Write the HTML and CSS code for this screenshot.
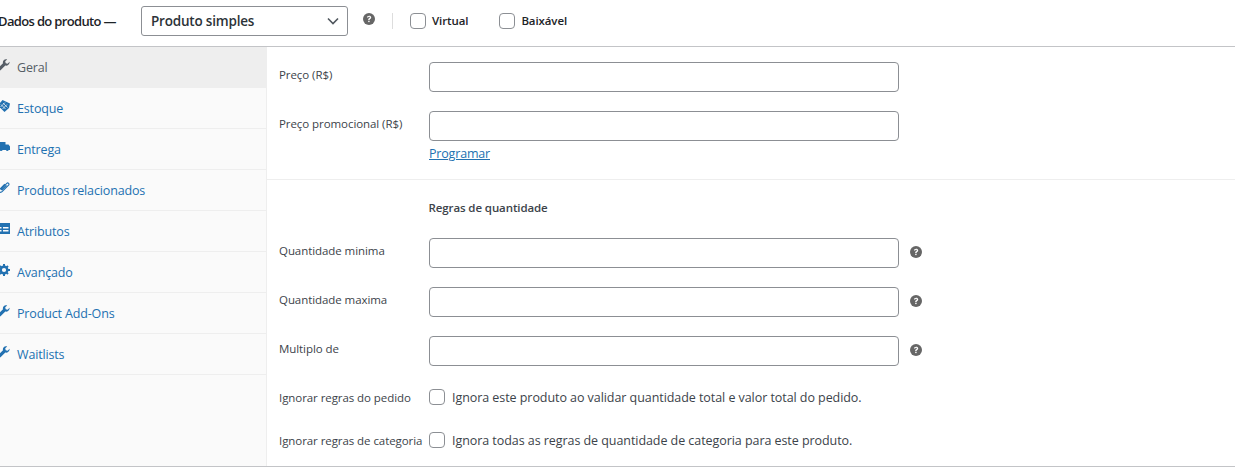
FILE: index.html
```html
<!DOCTYPE html>
<html lang="pt-BR">
<head>
<meta charset="utf-8">
<title>Dados do produto</title>
<link rel="stylesheet" href="styles.css">
</head>
<body>
<svg class="defs" aria-hidden="true" width="0" height="0">
  <symbol id="help" viewBox="0 0 12 12">
    <circle cx="6" cy="6" r="6" fill="currentColor"/>
    <path d="M3.9 4.600C4 3.400 4.900 2.700 6.100 2.700c1.200 0 2.100.7 2.100 1.700 0 .8-.5 1.200-1 1.500-.5.3-.6.5-.6 1H5.200c0-.9.3-1.300.8-1.700.4-.3.8-.4.8-.8 0-.3-.3-.6-.7-.6-.5 0-.8.3-.9.8z" fill="#fff"/>
    <rect x="5.200" y="7.700" width="1.400" height="1.400" fill="#fff"/>
  </symbol>
  <symbol id="wrench" viewBox="0 0 12 12">
    <path d="M11.600 2.700 9.600 4.700 7.700 4.200 7.200 2.300 9.200.4C7.900-.1 6.500.2 5.700 1.200 4.900 2 4.700 3.200 5 4.200L.5 8.700c-.6.6-.6 1.600 0 2.300.6.6 1.700.6 2.300 0l4.500-4.500c1 .3 2.200.1 3-.7 1-.9 1.400-2.300 1.300-3.100z" fill="currentColor"/>
  </symbol>
</svg>

<header class="top">
  <span class="title">Dados do produto —</span>
  <div class="select"><span>Produto simples</span>
    <svg class="chev" width="12" height="8" viewBox="0 0 12 8"><path d="M1 1.500 6 6.500 11 1.500" fill="none" stroke="currentColor" stroke-width="1.600"/></svg>
  </div>
  <svg class="help top-help" width="12" height="12"><use href="#help"/></svg>
  <span class="sep"></span>
  <label class="opt"><input type="checkbox" class="check">Virtual</label>
  <label class="opt opt-b"><input type="checkbox" class="check">Baixável</label>
</header>

<section class="panel">
  <nav class="tabs">
    <a class="tab active"><svg class="ico" width="12" height="12"><use href="#wrench"/></svg>Geral</a>
    <a class="tab"><svg class="ico" width="12" height="12" viewBox="0 0 12 12"><path d="M4.500 0 12 3.500 11 8 6.500 12 0 5.500z" fill="currentColor"/><path d="M3 4.500l4.500 4.500M5 3l4.500 4.500M2.500 7l4.500-4.500M4.500 9l4.500-4.500" stroke="#fafafa" stroke-width=".7"/></svg>Estoque</a>
    <a class="tab"><svg class="ico" width="12" height="12" viewBox="0 0 12 12"><path d="M0 1h7.500v2.500H10.500l1.500 2V9h-1.300a1.500 1.500 0 0 1-2.800 0H4.600a1.500 1.500 0 0 1-2.800 0H0z" fill="currentColor"/></svg>Entrega</a>
    <a class="tab"><svg class="ico" width="12" height="12" viewBox="0 0 12 12"><path d="M6.800 2.200 1.700 7.300c-1.800 1.800.6 4.200 2.400 2.400l6.500-6.500c1.200-1.200-.6-3-1.800-1.800L3.500 6.700c-.6.6.2 1.400.8.800l4.200-4.200" fill="none" stroke="currentColor" stroke-width="1.100"/></svg>Produtos relacionados</a>
    <a class="tab"><svg class="ico" width="12" height="12" viewBox="0 0 12 12"><path fill-rule="evenodd" d="M0 0h12v11H0zM1.500 4v1.500h2V4zM5 4v1.500h5.500V4zM1.500 7v1.500h2V7zM5 7v1.500h5.500V7z" fill="currentColor"/></svg>Atributos</a>
    <a class="tab"><svg class="ico" width="12" height="12" viewBox="0 0 12 12"><circle cx="6" cy="6" r="3.300" fill="none" stroke="currentColor" stroke-width="2.400"/><path d="M5 0h2v2H5zM5 10h2v2H5zM0 5h2v2H0zM10 5h2v2h-2zM1.300 2.700l1.400-1.400 1.400 1.400-1.400 1.400zM7.900 2.700l1.400-1.400 1.400 1.400-1.400 1.400zM1.300 9.300l1.400 1.400 1.400-1.400-1.400-1.400zM7.900 9.300l1.400 1.400 1.400-1.400-1.400-1.400z" fill="currentColor"/></svg>Avançado</a>
    <a class="tab"><svg class="ico" width="12" height="12"><use href="#wrench"/></svg>Product Add-Ons</a>
    <a class="tab"><svg class="ico" width="12" height="12"><use href="#wrench"/></svg>Waitlists</a>
  </nav>
  <div class="content">
    <div class="group group-price">
      <div class="row"><label class="lbl">Preço (R$)</label><input class="field"></div>
      <div class="row"><label class="lbl">Preço promocional (R$)</label><input class="field"></div>
      <a class="schedule">Programar</a>
    </div>
    <div class="group group-qty">
      <h4 class="heading">Regras de quantidade</h4>
      <div class="row"><label class="lbl">Quantidade minima</label><input class="field"><svg class="help" width="12" height="12"><use href="#help"/></svg></div>
      <div class="row"><label class="lbl">Quantidade maxima</label><input class="field"><svg class="help" width="12" height="12"><use href="#help"/></svg></div>
      <div class="row"><label class="lbl">Multiplo de</label><input class="field"><svg class="help" width="12" height="12"><use href="#help"/></svg></div>
      <div class="row row-check"><label class="lbl">Ignorar regras do pedido</label><input type="checkbox" class="check"><span class="desc">Ignora este produto ao validar quantidade total e valor total do pedido.</span></div>
      <div class="row row-check"><label class="lbl">Ignorar regras de categoria</label><input type="checkbox" class="check"><span class="desc">Ignora todas as regras de quantidade de categoria para este produto.</span></div>
    </div>
  </div>
</section>
</body>
</html>
```
FILE: styles.css
```css
* { box-sizing: border-box; }
html, body { margin: 0; padding: 0; }
body {
  background: #fff;
  color: #3c434a;
  font-family: "Open Sans", "Noto Sans", sans-serif;
  font-size: 12px;
  overflow: hidden;
  height: 467px;
}
.defs { position: absolute; }
.top {
  display: flex;
  align-items: center;
  height: 47px;
  margin-left: -2px;
  padding-bottom: 5px;
  border-bottom: 1px solid #c3c4c7;
  color: #1d2327;
}
.title { width: 143px; font-size: 13px; font-weight: 600; letter-spacing: -.65px; white-space: nowrap; }
.select {
  display: flex;
  align-items: center;
  justify-content: space-between;
  width: 207px;
  height: 30px;
  padding: 0 8px 0 9px;
  border: 1px solid #8c8f94;
  border-radius: 3px;
  font-size: 13.500px;
  font-weight: 600;
  color: #2c3338;
  letter-spacing: -.2px;
}
.chev { color: #50575e; }
.help { color: #666; flex: none; }
.top-help { margin-left: 15px; margin-top: -3px; }
.sep { width: 1px; height: 16px; background: #ddd; margin-left: 17px; }
.opt { display: flex; align-items: center; margin-left: 17px; font-size: 11.500px; font-weight: 600; letter-spacing: -.1px; }
.opt-b { margin-left: 31px; }
.opt .check { margin-right: 6px; }
.check {
  appearance: none;
  width: 16px;
  height: 16px;
  margin: 0;
  flex: none;
  background: #fff;
  border: 1px solid #8c8f94;
  border-radius: 4px;
}
.panel { display: flex; height: 420px; border-bottom: 1px solid #c3c4c7; }
.tabs { width: 267px; flex: none; background: #fafafa; border-right: 1px solid #eee; }
.tab {
  display: flex;
  align-items: center;
  height: 41px;
  padding-top: 1px;
  margin-left: -2px;
  width: calc(100% + 2px);
  border-bottom: 1px solid #eee;
  color: #2271b1;
  font-size: 12.500px;
  letter-spacing: -.15px;
}
.tab.active { background: #eee; color: #555d66; border-bottom-color: #eee; }
.ico { flex: none; margin-right: 7px; margin-top: -5px; }
.content { flex: 1; min-width: 0; }
.group-price { height: 133px; padding-top: 15px; border-bottom: 1px solid #eee; }
.row { display: flex; align-items: center; height: 30px; margin-bottom: 19px; padding-left: 12px; }
.lbl { width: 150px; flex: none; font-size: 11.500px; letter-spacing: -.07px; margin-top: -5px; white-space: nowrap; }
.field {
  width: 470px;
  height: 30px;
  padding: 0 8px;
  background: #fff;
  border: 1px solid #8c8f94;
  border-radius: 4px;
  flex: none;
}
.row .help { margin-left: 11px; margin-top: -2px; }
.schedule { display: block; margin: -15px 0 0 162px; color: #2271b1; text-decoration: underline; font-size: 12.500px; letter-spacing: -.18px; }
.group-qty { padding-top: 20px; }
.heading { margin: 0 0 22px 161.500px; font-size: 11.500px; font-weight: 600; letter-spacing: -.1px; color: #3c434a; line-height: 16px; }
.row-check { height: 16px; margin-bottom: 27px; }
.group-qty .row:nth-of-type(3) { margin-bottom: 23px; }
.row-check .lbl { margin-top: 0; }
.desc { margin-left: 7px; font-size: 12.500px; letter-spacing: -.06px; white-space: nowrap; }
```
